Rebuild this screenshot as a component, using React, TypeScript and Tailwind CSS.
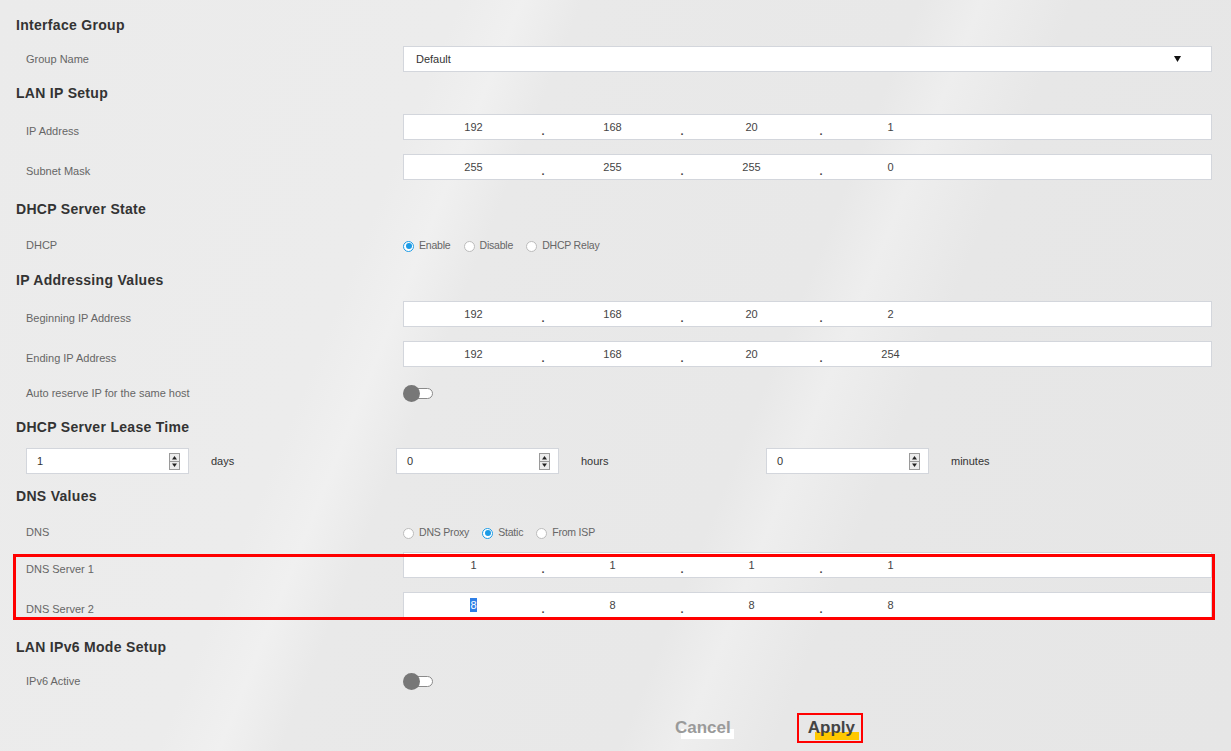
import type { ReactNode } from "react";

const font = { fontFamily: '"Liberation Sans", Arial, sans-serif' };

const Heading = ({ children, className = "" }: { children: ReactNode; className?: string }) => (
  <div className={`flex h-[26px] items-center pl-4 text-[14px] font-bold tracking-[0.3px] text-[#333] ${className}`}>
    {children}
  </div>
);

const Row = ({
  label,
  children,
  className = "",
  low = false,
}: {
  label: string;
  children: ReactNode;
  className?: string;
  low?: boolean;
}) => (
  <div className={`flex h-[26px] items-center ${className}`}>
    <div className={`w-[403px] shrink-0 pl-[26px] text-[11px] text-[#666] ${low ? "mt-2" : ""}`}>{label}</div>
    <div className="mr-[19px] flex h-full flex-1 items-center">{children}</div>
  </div>
);

const IpBox = ({ parts, selectFirst = false }: { parts: string[]; selectFirst?: boolean }) => (
  <div className="flex h-full w-full items-stretch border border-[#d3d6dc] bg-white text-[11px] text-[#444]">
    {parts.map((p, i) => (
      <div key={i} className="flex">
        <div className="flex w-[139px] items-center justify-center">
          {selectFirst && i === 0 ? (
            <span className="bg-[#2f7fe6] leading-[14px] text-white">{p}</span>
          ) : (
            p
          )}
        </div>
        {i < parts.length - 1 && (
          <div className="flex w-0 items-end justify-center overflow-visible pb-[2px] text-[11px] font-bold leading-none text-[#444]">
            .
          </div>
        )}
      </div>
    ))}
  </div>
);

const Radio = ({ label, checked = false }: { label: string; checked?: boolean }) => (
  <div className="mr-[13px] mt-[2px] flex items-center gap-[5px]">
    <span
      className={`flex h-[11px] w-[11px] items-center justify-center rounded-full border bg-white ${
        checked ? "border-[#1c9be6]" : "border-[#bcbcbc]"
      }`}
    >
      {checked && <span className="h-[6px] w-[6px] rounded-full bg-[#1c9be6]" />}
    </span>
    <span className="text-[10.5px] tracking-[-0.2px] text-[#666]">{label}</span>
  </div>
);

const Toggle = () => (
  <div className="relative h-[17px] w-[31px]">
    <div className="absolute left-[8px] top-[3px] h-[11px] w-[22px] rounded-full border border-[#8a8a8a] bg-white" />
    <div className="absolute left-0 top-0 h-[17px] w-[17px] rounded-full bg-[#777]" />
  </div>
);

const Spinner = () => (
  <svg width="11" height="17" viewBox="0 0 11 17" className="shrink-0">
    <rect x="0.5" y="0.5" width="10" height="16" fill="#ececec" stroke="#9a9a9a" />
    <line x1="1" y1="8.5" x2="10" y2="8.5" stroke="#9a9a9a" />
    <path d="M3 6.5 L5.5 3 L8 6.5 Z" fill="#222" />
    <path d="M3 10.5 L5.5 14 L8 10.5 Z" fill="#222" />
  </svg>
);

const LeaseField = ({ value, unit }: { value: string; unit: string }) => (
  <div className="flex w-[370px] items-center">
    <div className="flex h-[26px] w-[163px] items-center justify-between border border-[#d3d6dc] bg-white pl-[10px] pr-[8px] text-[11px] text-[#333]">
      <span>{value}</span>
      <Spinner />
    </div>
    <span className="ml-[22px] text-[11px] text-[#333]">{unit}</span>
  </div>
);

export default function App() {
  return (
    <div
      style={font}
      className="relative h-[751px] w-full overflow-hidden bg-[linear-gradient(112deg,#ebebeb_0%,#ececec_30%,#f0f0f0_34%,#e9e9e9_38%,#e8e8e8_60%,#eeeeee_64%,#e7e7e7_70%,#e6e6e6_100%)]"
    >
      <div className="pt-3">
        <Heading>Interface Group</Heading>
        <Row label="Group Name" className="mt-2">
          <div className="flex h-full w-full items-center justify-between border border-[#d3d6dc] bg-white pl-3 pr-[30px] text-[11px] text-[#333]">
            <span>Default</span>
            <svg width="7" height="6" viewBox="0 0 7 6">
              <path d="M0 0 H7 L3.5 6 Z" fill="#111" />
            </svg>
          </div>
        </Row>

        <Heading className="mt-2">LAN IP Setup</Heading>
        <Row label="IP Address" className="mt-2" low>
          <IpBox parts={["192", "168", "20", "1"]} />
        </Row>
        <Row label="Subnet Mask" className="mt-[14px]" low>
          <IpBox parts={["255", "255", "255", "0"]} />
        </Row>

        <Heading className="mt-4">DHCP Server State</Heading>
        <Row label="DHCP" className="mt-[10px]">
          <Radio label="Enable" checked />
          <Radio label="Disable" />
          <Radio label="DHCP Relay" />
        </Row>

        <Heading className="mt-[9px]">IP Addressing Values</Heading>
        <Row label="Beginning IP Address" className="mt-2" low>
          <IpBox parts={["192", "168", "20", "2"]} />
        </Row>
        <Row label="Ending IP Address" className="mt-[14px]" low>
          <IpBox parts={["192", "168", "20", "254"]} />
        </Row>
        <Row label="Auto reserve IP for the same host" className="mt-[13px]">
          <Toggle />
        </Row>

        <Heading className="mt-2">DHCP Server Lease Time</Heading>
        <div className="mt-2 flex pl-[26px]">
          <LeaseField value="1" unit="days" />
          <LeaseField value="0" unit="hours" />
          <LeaseField value="0" unit="minutes" />
        </div>

        <Heading className="mt-[9px]">DNS Values</Heading>
        <Row label="DNS" className="mt-[10px]">
          <Radio label="DNS Proxy" />
          <Radio label="Static" checked />
          <Radio label="From ISP" />
        </Row>

        <div className="relative mt-[7px]">
          <Row label="DNS Server 1" low>
            <IpBox parts={["1", "1", "1", "1"]} />
          </Row>
          <Row label="DNS Server 2" className="mt-[14px]" low>
            <IpBox parts={["8", "8", "8", "8"]} selectFirst />
          </Row>
          {/* highlight frame drawn over the DNS server rows */}
          <div className="pointer-events-none absolute left-[13px] top-[2px] h-[66px] w-[1202px] border-[3px] border-[#ff0000]" />
        </div>

        <Heading className="mt-4">LAN IPv6 Mode Setup</Heading>
        <Row label="IPv6 Active" className="mt-2">
          <Toggle />
        </Row>

        <div className="mt-[19px] flex h-[30px] items-center">
          <div className="relative ml-[675px] flex h-full items-center">
            <span className="absolute left-[6px] top-[16px] h-[10px] w-[53px] bg-white" />
            <span className="relative text-[17px] font-bold text-[#9a9a9a]">Cancel</span>
          </div>
          <div className="relative ml-[66px] flex h-[30px] w-[66px] items-center border-2 border-[#ff0000] pl-[9px]">
            <span className="absolute left-[16px] top-[17px] h-[8px] w-[44px] bg-[#ffc800]" />
            <span className="relative text-[17px] font-bold text-[#444]">Apply</span>
          </div>
        </div>
      </div>
    </div>
  );
}
